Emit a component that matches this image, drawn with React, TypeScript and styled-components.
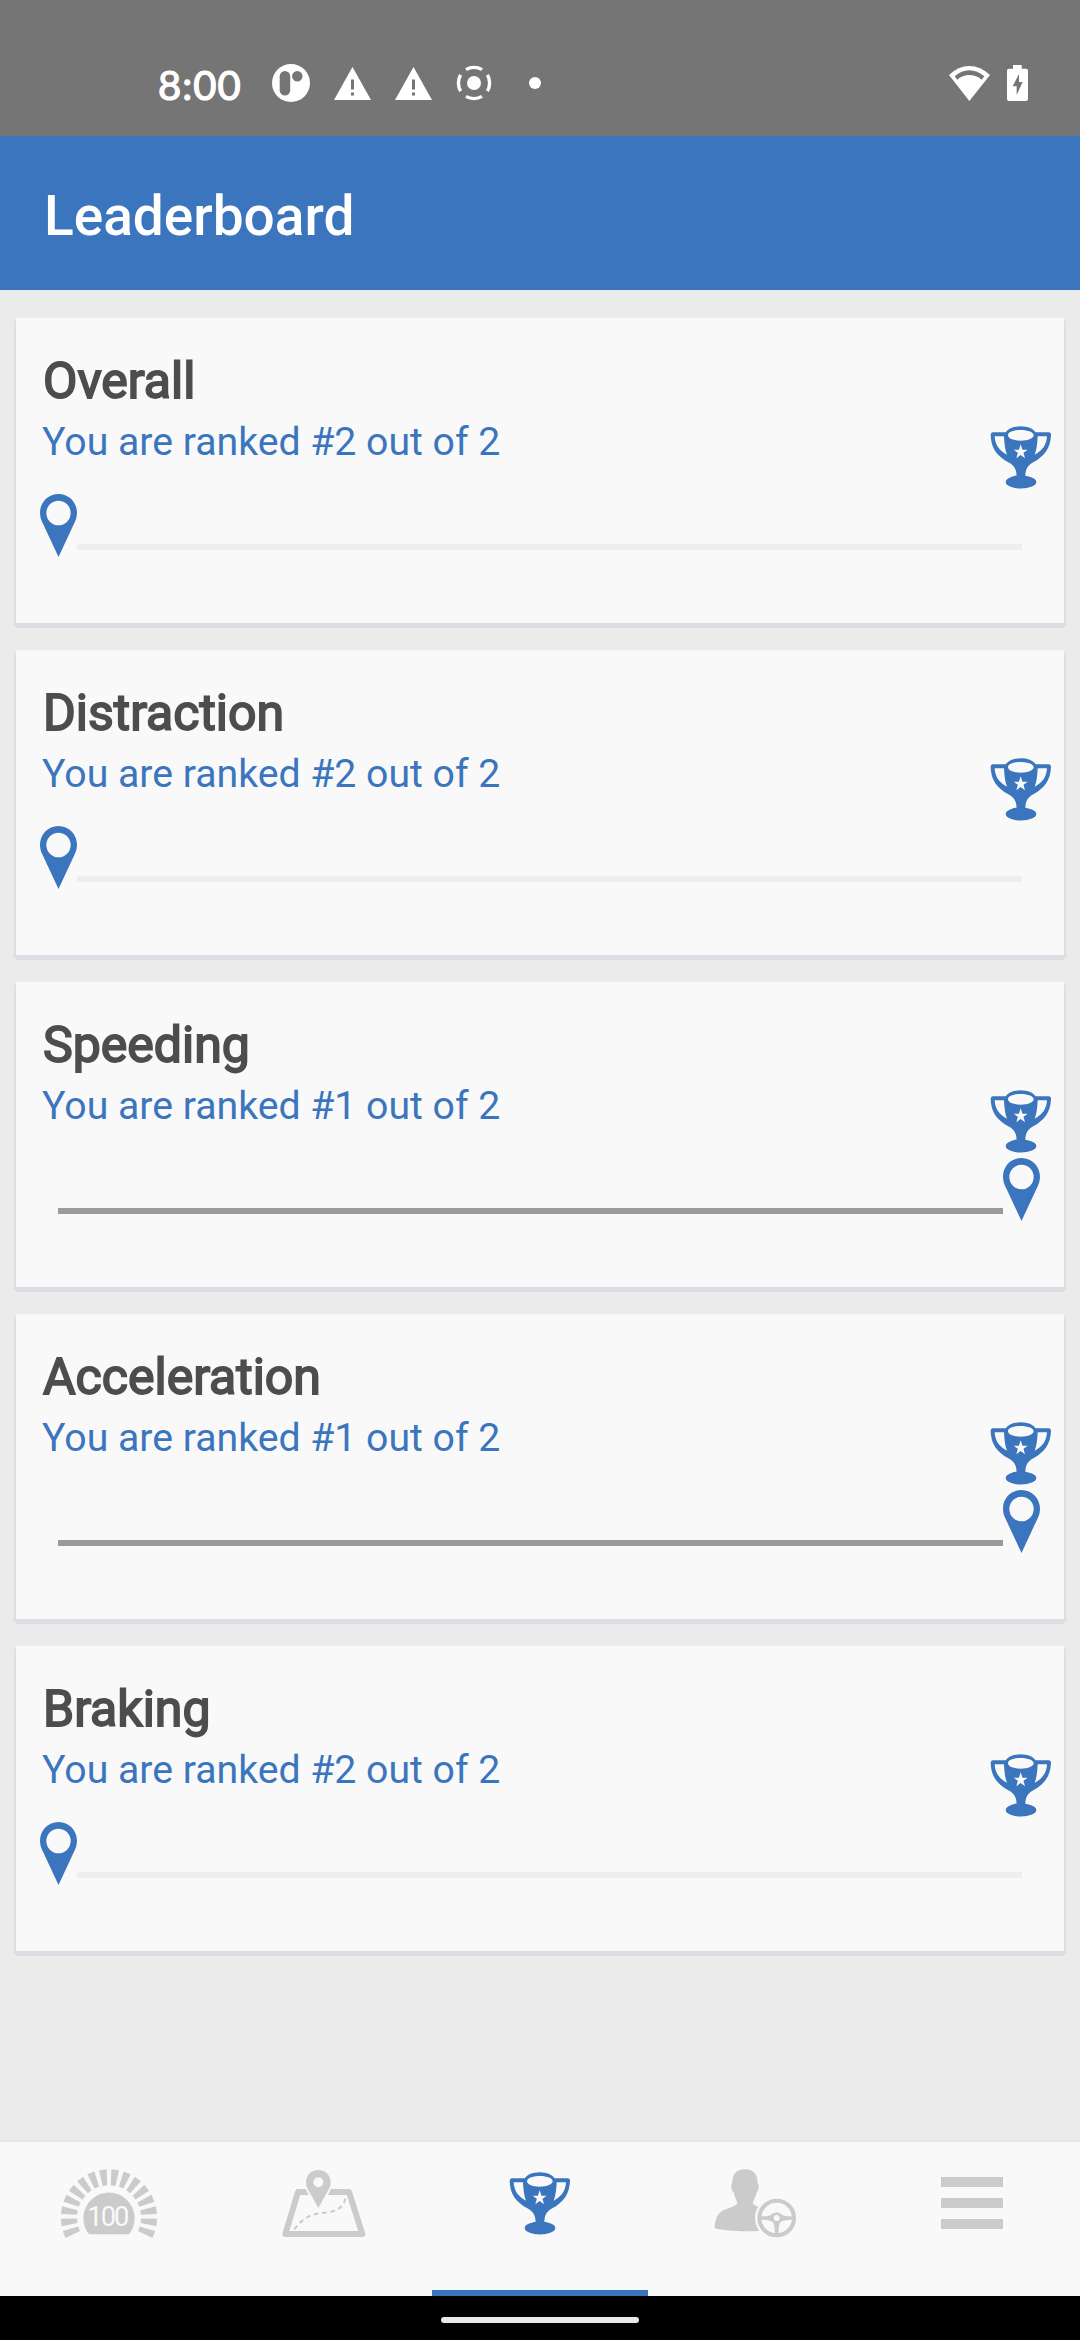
import React from "react";
import styled, { createGlobalStyle } from "styled-components";

const BLUE = "#3b75bd";
const PAPER = "#f9f9f9";
const MUTED = "#cbcbcb";

const GlobalStyle = createGlobalStyle`
  * { box-sizing: border-box; }
  body { margin: 0; background: #ebebeb; font-family: Roboto, "Liberation Sans", sans-serif; }
  svg { display: block; flex: none; }
`;

const Screen = styled.div`
  width: 1080px;
  height: 2340px;
  display: flex;
  flex-direction: column;
  overflow: hidden;
  background: #ebebeb;
`;

const StatusBar = styled.header`
  height: 136px;
  flex: none;
  display: flex;
  justify-content: space-between;
  padding: 63px 52px 0 158px;
  background: #757575;
`;

const StatusGroup = styled.div<{ $gap: number }>`
  display: flex;
  align-items: center;
  height: 40px;
  gap: ${(p) => p.$gap}px;
`;

const Clock = styled.span`
  width: 90px;
  font: 400 40px/40px Lato, Roboto, sans-serif;
  color: #fff;
  -webkit-text-stroke: 1.2px #fff;
  letter-spacing: 1px;
  white-space: nowrap;
  padding-top: 3px;
`;

const TitleBar = styled.div`
  height: 154px;
  flex: none;
  display: flex;
  align-items: center;
  padding: 5px 44px 0;
  background: ${BLUE};
`;

const PageTitle = styled.h1`
  margin: 0;
  font-size: 55px;
  font-weight: 500;
  line-height: 64px;
  color: #fff;
`;

const CardList = styled.main`
  flex: 1;
  display: flex;
  flex-direction: column;
  gap: 27px;
  padding: 28px 16px 0;
`;

const Card = styled.section`
  height: 305px;
  flex: none;
  display: flex;
  flex-direction: column;
  background: ${PAPER};
  box-shadow: 0 5px 0 #dcdce2, -2px 3px 1px #dfdfe3, 2px 3px 1px #dfdfe3;
`;

const CardTitle = styled.h2`
  height: 100px;
  margin: 0;
  padding: 33px 27px 0;
  font-size: 50px;
  font-weight: 400;
  line-height: 60px;
  color: #4d4d4d;
  -webkit-text-stroke: 1.8px #4d4d4d;
`;

const RankRow = styled.div`
  height: 76px;
  display: flex;
  justify-content: space-between;
  padding: 8px 12px 0 26px;
`;

const RankText = styled.p`
  margin: 0;
  padding-top: 1px;
  font-size: 39.2px;
  line-height: 30px;
  color: ${BLUE};
  white-space: nowrap;
`;

const Slider = styled.div<{ $full: boolean }>`
  display: flex;
  align-items: flex-start;
  padding: 0 ${(p) => (p.$full ? "24px 0 42px" : "42px 0 24px")};
`;

const Track = styled.div<{ $full: boolean }>`
  flex: 1;
  height: 6px;
  margin-top: 50px;
  background: ${(p) => (p.$full ? "#9a9a9a" : "#eeeeee")};
`;

const TabBar = styled.nav`
  height: 154px;
  flex: none;
  display: grid;
  grid-template-columns: repeat(5, 216px);
  background: ${PAPER};
  box-shadow: 0 -1px 2px #e4e4e4;
`;

const Tab = styled.div<{ $active?: boolean }>`
  display: flex;
  justify-content: center;
  padding-top: ${(p) => (p.$active ? 30 : 26)}px;
  border-bottom: 6px solid ${(p) => (p.$active ? BLUE : "transparent")};
`;

const GestureBar = styled.footer`
  height: 44px;
  flex: none;
  display: flex;
  justify-content: center;
  padding-top: 21px;
  background: #000;
`;

const GesturePill = styled.div`
  width: 198px;
  height: 6px;
  border-radius: 3px;
  background: #e9e9e7;
`;

const DotSlot = styled.div`
  padding-left: 13px;
`;

const AppBadgeIcon = () => (
  <svg width="38" height="38" viewBox="0 0 38 38">
    <circle cx="19" cy="19" r="19" fill="#fff" />
    <rect x="7.7" y="7" width="10.5" height="24.5" rx="5.2" fill="#757575" />
    <circle cx="25.3" cy="12.2" r="5.2" fill="#757575" />
  </svg>
);

const WarningIcon = () => (
  <svg width="37" height="33" viewBox="0 0 37 33">
    <path d="M18.5 0 37 33H0Z" fill="#fff" />
    <path d="M18.5 12.5v10M18.5 25.5v3" stroke="#757575" strokeWidth="3" />
  </svg>
);

const TargetIcon = () => (
  <svg width="36" height="36" viewBox="0 0 36 36" fill="none">
    <circle cx="18" cy="18" r="7" fill="#fff" />
    <circle
      cx="18" cy="18" r="15.6" stroke="#fff" strokeWidth="3.4" pathLength="360"
      strokeDasharray="62 28" strokeDashoffset="31" strokeLinecap="butt"
    />
  </svg>
);

const DotIcon = () => (
  <svg width="12" height="12" viewBox="0 0 12 12">
    <circle cx="6" cy="6" r="6" fill="#fff" />
  </svg>
);

const WifiIcon = () => (
  <svg width="41" height="35" viewBox="0 0 123 105">
    <path d="M61 105 0 27Q28 0 61 0T123 27Z" fill="#fff" />
    <path d="M17 31Q37 13 61 13T106 31L98 41Q82 27 61 27T25 41Z" fill="#757575" />
  </svg>
);

const BatteryIcon = () => (
  <svg width="21" height="36" viewBox="0 0 63 108">
    <path d="M18 0h26v11h13q6 0 6 6v85q0 6-6 6H6q-6 0-6-6V17q0-6 6-6h12Z" fill="#fff" />
    <path d="M36 27 17 64h12v26l18-39H36Z" fill="#757575" />
  </svg>
);

const TrophyIcon = () => (
  <svg width="62" height="63" viewBox="91 77 186 189">
    <g fill={BLUE}>
      <path
        fillRule="evenodd"
        d="M99 96H138Q150 78 183 78T228 96H267Q274 96 274 104C272 145 254 167 221 186C202 197 197 207 197 232H171C171 207 165 197 146 186C113 167 94 145 93 104Q93 96 99 96ZM105 108C106 133 119 152 142 163C136 148 134 130 133 108ZM262 108H234C233 130 231 148 225 163C248 152 261 133 262 108ZM183 89C160 89 145 96 145 105S160 121 183 121S222 114 222 105S206 89 183 89Z"
      />
      <ellipse cx="184" cy="245" rx="46" ry="19.5" />
    </g>
    <path
      d="M183 132 188.3 148H204L191.500 157.500 196 173.500 183 164 170 173.500 174.500 157.500 162 148H177.700Z"
      fill={PAPER}
    />
  </svg>
);

const PinIcon = () => (
  <svg width="37" height="63" viewBox="0 0 111 189">
    <path
      fillRule="evenodd"
      d="M55.500 0C24 0 0 25 0 56C0 69 4 79 9 89L55.500 189 102 89C107 79 111 69 111 56C111 25 87 0 55.500 0ZM55.500 20A36.500 37 0 1 1 55.500 94A36.500 37 0 1 1 55.500 20Z"
      fill={BLUE}
    />
  </svg>
);

const RAY_ANGLES = Array.from({ length: 16 }, (_, i) => (i - 7.5) * 14.8);

const ScoreIcon = () => (
  <svg width="98" height="72" viewBox="58 84 294 216" fill={MUTED}>
    {RAY_ANGLES.map((angle) => (
      <path key={angle} d="M196.500 88h23l-4.500 48h-14Z" transform={`rotate(${angle} 208 232)`} />
    ))}
    <path d="M148 283A77 77 0 1 1 268 283Z" />
    <text
      x="203" y="257" fill={PAPER} fontFamily="Roboto, sans-serif" fontSize="82"
      letterSpacing="-6" textAnchor="middle"
    >
      100
    </text>
  </svg>
);

const TripsIcon = () => (
  <svg width="86" height="72" viewBox="63 84 258 216" fill="none">
    <path d="M114 156H267L307 282H76Z" stroke={MUTED} strokeWidth="18" strokeLinejoin="round" />
    <path
      d="M103 268C125 238 150 222 185 219C222 216 254 208 257 168"
      stroke={MUTED} strokeWidth="6" strokeDasharray="14 11"
    />
    <path
      fillRule="evenodd"
      d="M175 90C154 90 138 106 138 127C138 136 141 143 145 150L175 204 205 150C209 143 212 136 212 127C212 106 196 90 175 90Z"
      fill={MUTED} stroke={PAPER} strokeWidth="12" paintOrder="stroke"
    />
    <circle cx="175" cy="127" r="15" fill={PAPER} />
  </svg>
);

const DriverIcon = () => (
  <svg width="84" height="72" viewBox="71 84 252 216" fill="none">
    <path
      d="M164 88C139 88 125 103 126 130C120 135 123 153 130 157C133 171 139 179 141 191C130 201 111 204 96 212C80 222 73 242 73 265C105 274 170 276 215 272V205C205 200 194 199 187 190C190 178 197 169 199 157C206 152 208 136 202 130C203 103 189 88 164 88Z"
      fill={MUTED}
    />
    <circle cx="259" cy="234" r="65" fill={PAPER} />
    <circle cx="259" cy="234" r="52" stroke={MUTED} strokeWidth="12" />
    <path
      d="M211 229C230 229 240 228 246 221Q259 212 272 221C278 228 288 229 307 229V239C286 239 275 242 270 247Q265 252 264 284H254Q253 252 248 247C243 242 232 239 211 239Z"
      fill={MUTED}
    />
    <circle cx="259" cy="234" r="9" fill={PAPER} />
  </svg>
);

const MenuIcon = () => (
  <svg width="62" height="72" viewBox="0 0 62 72" fill={MUTED}>
    <rect y="9" width="62" height="10" />
    <rect y="30" width="62" height="10" />
    <rect y="51" width="62" height="10" />
  </svg>
);

type Ranking = { name: string; rank: number; total: number };

const RANKINGS: Ranking[] = [
  { name: "Overall", rank: 2, total: 2 },
  { name: "Distraction", rank: 2, total: 2 },
  { name: "Speeding", rank: 1, total: 2 },
  { name: "Acceleration", rank: 1, total: 2 },
  { name: "Braking", rank: 2, total: 2 },
];

const RankingCard = ({ name, rank, total }: Ranking) => {
  const full = rank === 1;
  return (
    <Card>
      <CardTitle>{name}</CardTitle>
      <RankRow>
        <RankText>{`You are ranked #${rank} out of ${total}`}</RankText>
        <TrophyIcon />
      </RankRow>
      <Slider $full={full}>
        {!full && <PinIcon />}
        <Track $full={full} />
        {full && <PinIcon />}
      </Slider>
    </Card>
  );
};

export default function App() {
  return (
    <Screen>
      <GlobalStyle />
      <StatusBar>
        <StatusGroup $gap={24}>
          <Clock>8:00</Clock>
          <AppBadgeIcon />
          <WarningIcon />
          <WarningIcon />
          <TargetIcon />
          <DotSlot><DotIcon /></DotSlot>
        </StatusGroup>
        <StatusGroup $gap={17}>
          <WifiIcon />
          <BatteryIcon />
        </StatusGroup>
      </StatusBar>
      <TitleBar>
        <PageTitle>Leaderboard</PageTitle>
      </TitleBar>
      <CardList>
        {RANKINGS.map((r) => (
          <RankingCard key={r.name} {...r} />
        ))}
      </CardList>
      <TabBar>
        <Tab><ScoreIcon /></Tab>
        <Tab><TripsIcon /></Tab>
        <Tab $active><TrophyIcon /></Tab>
        <Tab><DriverIcon /></Tab>
        <Tab><MenuIcon /></Tab>
      </TabBar>
      <GestureBar>
        <GesturePill />
      </GestureBar>
    </Screen>
  );
}
